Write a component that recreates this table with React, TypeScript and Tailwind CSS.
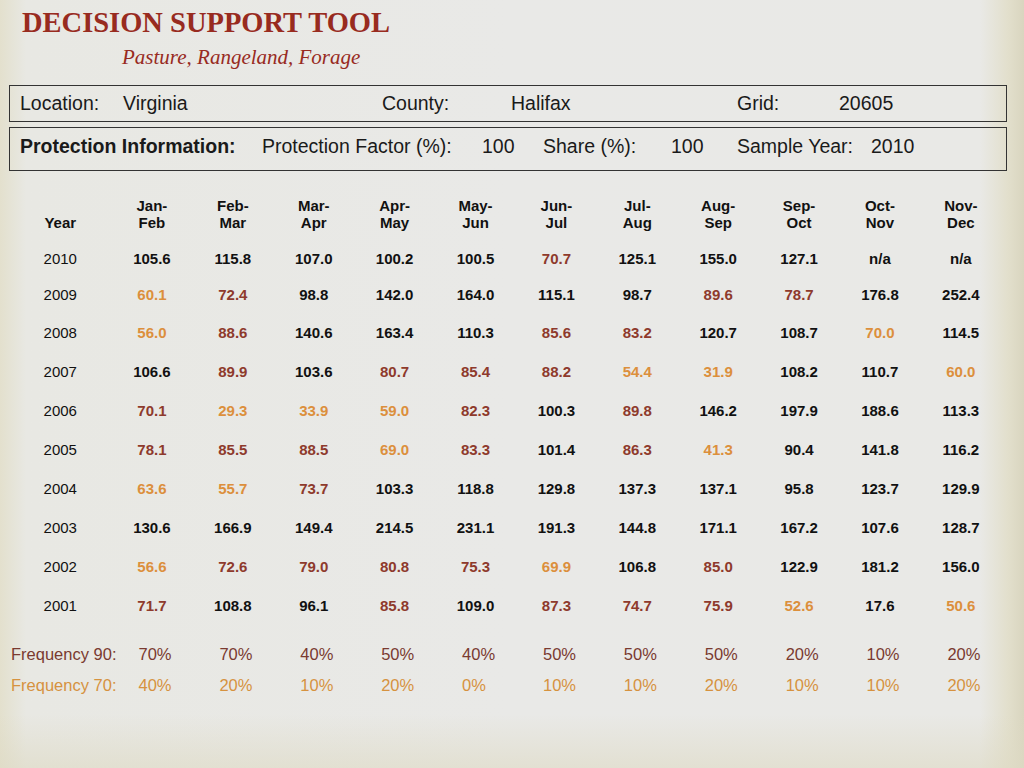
const months = [
  ['Jan-', 'Feb'],
  ['Feb-', 'Mar'],
  ['Mar-', 'Apr'],
  ['Apr-', 'May'],
  ['May-', 'Jun'],
  ['Jun-', 'Jul'],
  ['Jul-', 'Aug'],
  ['Aug-', 'Sep'],
  ['Sep-', 'Oct'],
  ['Oct-', 'Nov'],
  ['Nov-', 'Dec'],
];

const rows: { year: string; values: string[]; h: string }[] = [
  { year: '2010', h: 'h-[36px]', values: ['105.6', '115.8', '107.0', '100.2', '100.5', '70.7', '125.1', '155.0', '127.1', 'n/a', 'n/a'] },
  { year: '2009', h: 'h-[37px]', values: ['60.1', '72.4', '98.8', '142.0', '164.0', '115.1', '98.7', '89.6', '78.7', '176.8', '252.4'] },
  { year: '2008', h: 'h-[39px]', values: ['56.0', '88.6', '140.6', '163.4', '110.3', '85.6', '83.2', '120.7', '108.7', '70.0', '114.5'] },
  { year: '2007', h: 'h-[39px]', values: ['106.6', '89.9', '103.6', '80.7', '85.4', '88.2', '54.4', '31.9', '108.2', '110.7', '60.0'] },
  { year: '2006', h: 'h-[39px]', values: ['70.1', '29.3', '33.9', '59.0', '82.3', '100.3', '89.8', '146.2', '197.9', '188.6', '113.3'] },
  { year: '2005', h: 'h-[39px]', values: ['78.1', '85.5', '88.5', '69.0', '83.3', '101.4', '86.3', '41.3', '90.4', '141.8', '116.2'] },
  { year: '2004', h: 'h-[39px]', values: ['63.6', '55.7', '73.7', '103.3', '118.8', '129.8', '137.3', '137.1', '95.8', '123.7', '129.9'] },
  { year: '2003', h: 'h-[39px]', values: ['130.6', '166.9', '149.4', '214.5', '231.1', '191.3', '144.8', '171.1', '167.2', '107.6', '128.7'] },
  { year: '2002', h: 'h-[39px]', values: ['56.6', '72.6', '79.0', '80.8', '75.3', '69.9', '106.8', '85.0', '122.9', '181.2', '156.0'] },
  { year: '2001', h: 'h-[39px]', values: ['71.7', '108.8', '96.1', '85.8', '109.0', '87.3', '74.7', '75.9', '52.6', '17.6', '50.6'] },
];

const freq90 = ['70%', '70%', '40%', '50%', '40%', '50%', '50%', '50%', '20%', '10%', '20%'];
const freq70 = ['40%', '20%', '10%', '20%', '0%', '10%', '10%', '20%', '10%', '10%', '20%'];

// below 70 is orange, 70-90 is red; 17.6 stays black in the source sheet
function valueColor(v: string) {
  const n = parseFloat(v);
  if (isNaN(n) || v === '17.6') return 'text-[#111111]';
  if (n <= 70) return 'text-[#dc8f3c]';
  if (n < 90) return 'text-[#8e3a2c]';
  return 'text-[#111111]';
}

const grid = 'grid grid-cols-[111.5px_repeat(11,80.9px)]';

export default function App() {
  return (
    <div className="w-[1024px] h-[768px] overflow-hidden relative font-['Liberation_Sans',Arial,sans-serif] bg-[linear-gradient(to_bottom,transparent_93%,rgba(222,218,196,0.6)),linear-gradient(to_right,#e3e0cd_0px,#e8e8e3_26px,#e9e9e7_50%,#e9e9e6_980px,#e2dfcc_1008px,#d9d5bf_1024px)]">
      {/* Title */}
      <div className="pl-[22px] pt-[7px] font-['Liberation_Serif','Times_New_Roman',serif] text-[#982b1f]">
        <h1 className="text-[28.5px] font-bold leading-[32px]">DECISION SUPPORT TOOL</h1>
        <p className="pl-[100px] text-[21px] italic leading-[26px] mt-[5px]">Pasture, Rangeland, Forage</p>
      </div>

      {/* Location box */}
      <div className="ml-[9px] w-[998px] mt-[15px] h-[37px] border border-[#333] flex items-center pl-[10px] text-[19.5px] text-[#1a1a1a]">
        <span className="w-[103px]">Location:</span>
        <span className="w-[259px]">Virginia</span>
        <span className="w-[129px]">County:</span>
        <span className="w-[226px]">Halifax</span>
        <span className="w-[102px]">Grid:</span>
        <span>20605</span>
      </div>

      {/* Protection box */}
      <div className="ml-[9px] w-[998px] mt-[5px] h-[44px] border border-[#333] flex items-center pl-[10px] pb-[5px] text-[19.5px] text-[#1a1a1a]">
        <span className="w-[242px] font-bold">Protection Information:</span>
        <span className="w-[220px]">Protection Factor (%):</span>
        <span className="w-[61px]">100</span>
        <span className="w-[128px]">Share (%):</span>
        <span className="w-[66px]">100</span>
        <span className="w-[134px]">Sample Year:</span>
        <span>2010</span>
      </div>

      {/* Table header */}
      <div className={`${grid} mt-[26px] text-[15px] font-bold leading-[17px] text-[#111]`}>
        <div className="pl-[9px] text-center self-end">Year</div>
        {months.map(([a, b]) => (
          <div key={a} className="text-center">
            <div>{a}</div>
            <div>{b}</div>
          </div>
        ))}
      </div>

      {/* Table rows */}
      <div className="mt-[10px]">
        {rows.map((r) => (
          <div key={r.year} className={`${grid} ${r.h} items-center text-[15px]`}>
            <div className="pl-[9px] text-center text-[#111]">{r.year}</div>
            {r.values.map((v, i) => (
              <div key={i} className={`text-center font-bold ${valueColor(v)}`}>
                {v}
              </div>
            ))}
          </div>
        ))}
      </div>

      {/* Frequency rows */}
      <div className="mt-[13px] text-[16.5px]">
        <div className={`${grid} h-[31px] items-center text-[#7a3a30]`}>
          <div className="pl-[11px] whitespace-nowrap">Frequency 90:</div>
          {freq90.map((v, i) => (
            <div key={i} className="pl-[27px]">{v}</div>
          ))}
        </div>
        <div className={`${grid} h-[31px] items-center text-[#d6923f]`}>
          <div className="pl-[11px] whitespace-nowrap">Frequency 70:</div>
          {freq70.map((v, i) => (
            <div key={i} className="pl-[27px]">{v}</div>
          ))}
        </div>
      </div>
    </div>
  );
}
